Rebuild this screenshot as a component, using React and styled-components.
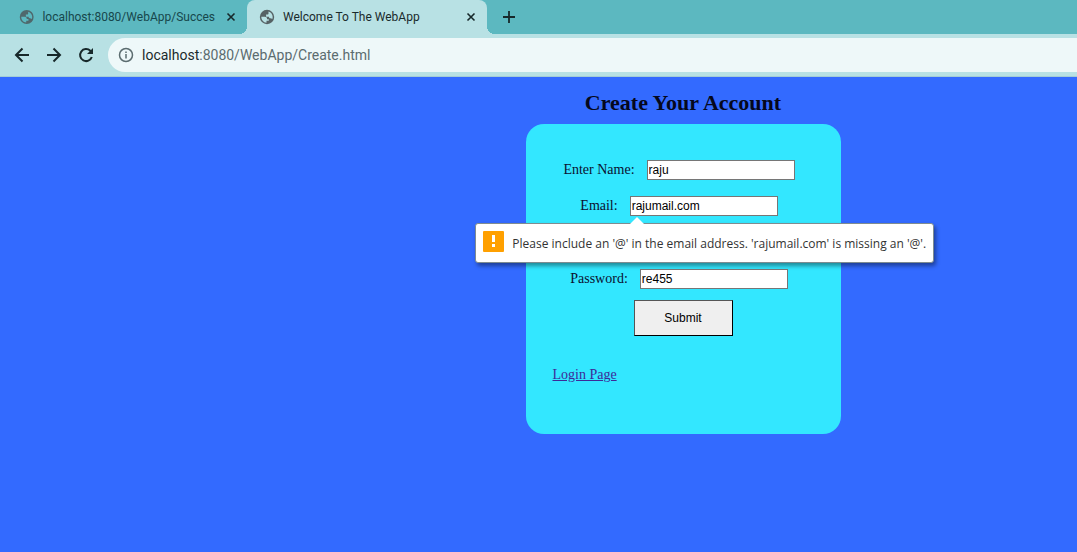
import React from "react";
import styled, { createGlobalStyle } from "styled-components";

const GlobalStyle = createGlobalStyle`
  * { box-sizing: border-box; }
  html, body, #root { height: 100%; }
  body { margin: 0; background: #336aff; overflow: hidden; }
`;

const uiFont = `"Open Sans", "Noto Sans", sans-serif`;
const tabFont = `Roboto, "Open Sans", sans-serif`;

const Window = styled.div`
  min-height: 100%;
  display: flex;
  flex-direction: column;
`;

const TabStrip = styled.div`
  display: flex;
  align-items: stretch;
  height: 34px;
  padding-left: 7px;
  background: #5cb8c0;
  font: 12px/16px ${tabFont};
`;

const Tab = styled.div`
  position: relative;
  display: flex;
  align-items: center;
  gap: 8px;
  width: 240px;
  padding: 0 8px 0 12px;
  color: ${(p) => (p.$active ? "#1a2a2c" : "#17474c")};
  background: ${(p) => (p.$active ? "#b8e1e4" : "transparent")};
  border-radius: 8px 8px 0 0;

  ${(p) => p.$active && `
    &::before, &::after {
      content: "";
      position: absolute;
      bottom: 0;
      width: 8px;
      height: 8px;
    }
    &::before {
      right: 100%;
      background: radial-gradient(circle at 0 0, transparent 8px, #b8e1e4 8px);
    }
    &::after {
      left: 100%;
      background: radial-gradient(circle at 100% 0, transparent 8px, #b8e1e4 8px);
    }
  `}
`;

const TabTitle = styled.span`
  flex: 1;
  white-space: nowrap;
`;

const IconButton = styled.button`
  display: flex;
  align-items: center;
  justify-content: center;
  flex: none;
  padding: 0;
  border: 0;
  background: none;
  color: #17282a;
`;

const NewTab = styled(IconButton)`
  width: 28px;
  margin-left: 8px;
`;

const Toolbar = styled.div`
  display: flex;
  align-items: center;
  gap: 12px;
  height: 43px;
  padding-left: 12px;
  background: #b8e1e4;
  border-bottom: 1px solid #a4cdd6;
`;

const AddressBar = styled.div`
  display: flex;
  flex: 1;
  align-items: center;
  gap: 8px;
  height: 34px;
  padding-left: 10px;
  background: #eef8f9;
  border-radius: 17px 0 0 17px;
  color: #5b6c6f;
  font: 14px/20px ${tabFont};

  b { font-weight: 400; color: #1a2a2c; }
`;

const Page = styled.main`
  flex: 1;
  display: flex;
  flex-direction: column;
  align-items: center;
  padding: 12px 0 0 289px;
  font: 14px/20px "Liberation Serif", serif;
  color: #0b1030;
`;

const Title = styled.h1`
  margin: 0 0 8px;
  font-size: 22px;
  line-height: 27px;
  color: #05081c;
`;

const Card = styled.form`
  display: flex;
  flex-direction: column;
  width: 315px;
  padding: 36px 27px 49px;
  background: #33e7ff;
  border-radius: 18px;
`;

const Field = styled.div`
  position: relative;
  display: flex;
  align-items: center;
  align-self: center;
  gap: 12px;
  margin-right: 8px;
  margin-bottom: ${(p) => p.$gap || 16}px;
`;

const TextInput = styled.input`
  width: 148px;
  height: 20px;
  padding: 1px;
  border: 1px solid #767676;
  border-radius: 0;
  background: #fff;
  color: #000;
  font: 12px "Liberation Sans", sans-serif;
  outline: 0;
`;

const Submit = styled.button`
  align-self: center;
  width: 99px;
  height: 36px;
  border: 1px solid #000;
  border-top-color: #555;
  border-left-color: #555;
  background: #efefef;
  color: #000;
  font: 12px "Liberation Sans", sans-serif;
`;

const LoginLink = styled.a`
  align-self: flex-start;
  margin-top: 29px;
  color: #3d2a99;
`;

const Bubble = styled.div`
  position: absolute;
  top: 27px;
  left: -105px;
  display: flex;
  align-items: center;
  gap: 8px;
  width: 459px;
  height: 40px;
  padding: 0 7px;
  background: #fff;
  border: 1px solid #7f8c90;
  border-radius: 3px;
  box-shadow: 2px 3px 4px rgba(0, 0, 0, 0.4);
  font: 12px/16px ${uiFont};
  color: #333;
  white-space: nowrap;

  span { padding-top: 2px; }
`;

const Pointer = styled.svg`
  position: absolute;
  top: -8px;
  left: 154px;
`;

const Warning = styled.svg`
  margin-bottom: 4px;
`;

const Stroke = ({ size, width = 2, children }) => (
  <svg width={size} height={size} viewBox={`0 0 ${size} ${size}`} fill="none" stroke="currentColor" strokeWidth={width}>
    {children}
  </svg>
);

const Globe = ({ color, land }) => (
  <svg width="16" height="16" viewBox="0 0 16 16">
    <circle cx="8" cy="8" r="7.2" fill={color} />
    <path
      d="M2.300 7.800h3.500c1.500 0 2.200.8 2.200 1.800v.6h1.800v1.600H7.500v1.900C4.500 13.600 2.300 11 2.300 7.800zM9.500 2.500c2.500.7 4.200 2.900 4.200 5.500 0 .8-.2 1.500-.4 2.100-.6-.7-1.200-.9-2-.9-.9 0-1.400-.6-1.400-1.500H7.100V5.500h1.400c.7 0 1-.5 1-1.100z"
      fill={land}
    />
  </svg>
);

const Close = ({ label }) => (
  <IconButton type="button" aria-label={label}>
    <Stroke size={16} width={1.6}><path d="m4.500 4.500 7 7m0-7-7 7" /></Stroke>
  </IconButton>
);

export default function App() {
  return (
    <Window>
      <GlobalStyle />
      <TabStrip>
        <Tab>
          <Globe color="#4f686c" land="#5cb8c0" />
          <TabTitle>localhost:8080/WebApp/Succes</TabTitle>
          <Close label="Close first tab" />
        </Tab>
        <Tab $active>
          <Globe color="#566265" land="#b8e1e4" />
          <TabTitle>Welcome To The WebApp</TabTitle>
          <Close label="Close second tab" />
        </Tab>
        <NewTab type="button" aria-label="New tab">
          <Stroke size={16} width={1.8}><path d="M8 2v12M2 8h12" /></Stroke>
        </NewTab>
      </TabStrip>
      <Toolbar>
        <IconButton type="button" aria-label="Back">
          <Stroke size={20}><path d="M17 10H4M10.500 3.500 4 10l6.500 6.500" /></Stroke>
        </IconButton>
        <IconButton type="button" aria-label="Forward">
          <Stroke size={20}><path d="M3 10h13M9.500 3.500 16 10l-6.500 6.500" /></Stroke>
        </IconButton>
        <IconButton type="button" aria-label="Reload">
          <Stroke size={20}>
            <path d="M15.800 12a6 6 0 1 1-1.500-6.200L16 7.500" />
            <path d="M17 3v6h-6z" fill="currentColor" stroke="none" />
          </Stroke>
        </IconButton>
        <AddressBar>
          <Stroke size={16} width={1.5}>
            <circle cx="8" cy="8" r="6.500" />
            <path d="M8 7v4.500M8 4.500V6" />
          </Stroke>
          <span><b>localhost</b>:8080/WebApp/Create.html</span>
        </AddressBar>
      </Toolbar>
      <Page>
        <Title>Create Your Account</Title>
        <Card noValidate onSubmit={(e) => e.preventDefault()}>
          <Field>
            <label htmlFor="name">Enter Name:</label>
            <TextInput id="name" defaultValue="raju" />
          </Field>
          <Field $gap={53}>
            <label htmlFor="email">Email:</label>
            <TextInput id="email" type="email" defaultValue="rajumail.com" />
            <Bubble role="alert">
              <Pointer width="14" height="9" viewBox="0 0 14 9">
                <path d="M0 8 7 1l7 7v1H0z" fill="#fff" />
              </Pointer>
              <Warning width="21" height="21" viewBox="0 0 21 21">
                <rect width="21" height="21" rx="1" fill="#ffa000" />
                <path d="M9 4h3v7H9zM9 13h3v3H9z" fill="#fff" />
              </Warning>
              <span>Please include an '@' in the email address. 'rajumail.com' is missing an '@'.</span>
            </Bubble>
          </Field>
          <Field $gap={11}>
            <label htmlFor="password">Password:</label>
            <TextInput id="password" defaultValue="re455" />
          </Field>
          <Submit type="submit">Submit</Submit>
          <LoginLink href="#login">Login Page</LoginLink>
        </Card>
      </Page>
    </Window>
  );
}
